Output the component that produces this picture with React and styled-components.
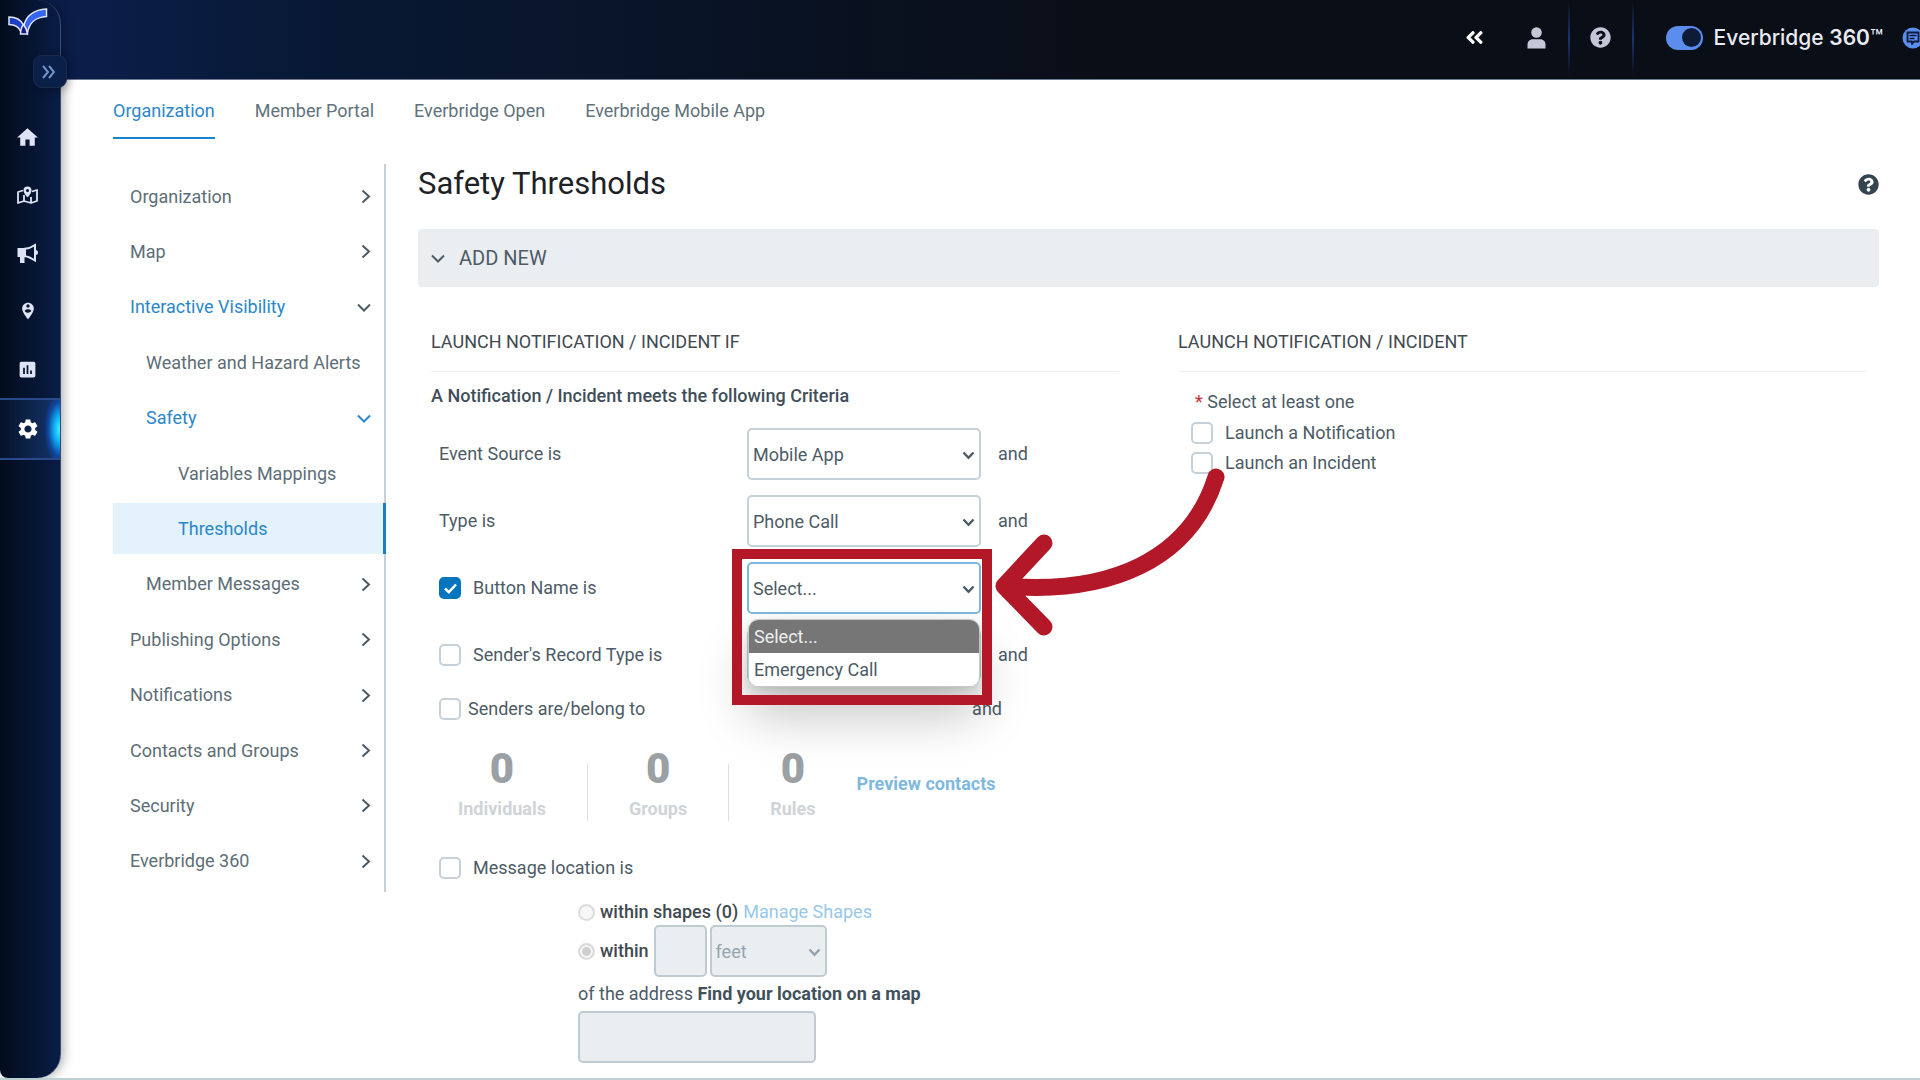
import React, { useState } from "react";
import styled, { createGlobalStyle, css } from "styled-components";
import { FaAngleDoubleLeft, FaQuestionCircle } from "react-icons/fa";
import { MdHome, MdInsertChart, MdPersonPinCircle, MdSettings } from "react-icons/md";

const tabs = ["Organization", "Member Portal", "Everbridge Open", "Everbridge Mobile App"];

const menu = [
    { label: "Organization", level: 0, arrow: "right" },
    { label: "Map", level: 0, arrow: "right" },
    { label: "Interactive Visibility", level: 0, arrow: "down", open: true },
    { label: "Weather and Hazard Alerts", level: 1 },
    { label: "Safety", level: 1, arrow: "down", open: true, blueArrow: true },
    { label: "Variables Mappings", level: 2 },
    { label: "Thresholds", level: 2, open: true, current: true },
    { label: "Member Messages", level: 1, arrow: "right" },
    { label: "Publishing Options", level: 0, arrow: "right" },
    { label: "Notifications", level: 0, arrow: "right" },
    { label: "Contacts and Groups", level: 0, arrow: "right" },
    { label: "Security", level: 0, arrow: "right" },
    { label: "Everbridge 360", level: 0, arrow: "right" },
];

function Logo() {
    return (
        <svg width="40" height="28" viewBox="0 0 40 28" aria-hidden="true">
            <path
                d="M16 17 C18 8 26 1.500 38.500 1 V8.500 C28 9 21 15 19.500 25 Z"
                fill="#3563f2"
                stroke="#dfe4fb"
                strokeWidth="1.500"
            />
            <path
                d="M1 9 C8 9 13 12 15.500 17 L13 24 C11 19 7 16.500 1 16.500 Z"
                fill="#1d3fc4"
                stroke="#dfe4fb"
                strokeWidth="1.500"
            />
            <path
                d="M15.500 16.500 C17.500 19 19 22 19.500 26 H12.500 C12.500 22.500 13.500 19 15.500 16.500 Z"
                fill="#141a86"
                stroke="#dfe4fb"
                strokeWidth="1.500"
            />
        </svg>
    );
}

function MapIcon() {
    return (
        <svg width="21" height="19" viewBox="0 0 21 19" fill="none" aria-hidden="true">
            <path
                d="M6 4.500 L1 6 V17 L7 15 L14 17 L20 15 V4 L15 5.500 M7 9 V15 M14 11 V17"
                stroke="currentColor"
                strokeWidth="1.800"
                strokeLinejoin="round"
            />
            <path
                fillRule="evenodd"
                d="M10.500 0.500 a4 4 0 0 1 4 4 c0 2.800 -4 7 -4 7 s-4 -4.200 -4 -7 a4 4 0 0 1 4 -4 Z M10.500 3 a1.500 1.500 0 1 0 0 3 a1.500 1.500 0 0 0 0 -3 Z"
                fill="currentColor"
            />
        </svg>
    );
}

function MegaphoneIcon() {
    return (
        <svg width="21" height="21" viewBox="0 0 21 21" aria-hidden="true">
            <path d="M0.500 5 H8 V14 H7.500 V20 H3 V14 H0.500 Z" fill="currentColor" />
            <path
                d="M8 5.800 C12 5.500 15 4 18 2 V17.500 C15 15.500 12 13.500 8 13.200 Z"
                fill="none"
                stroke="currentColor"
                strokeWidth="2"
            />
            <path d="M18.500 7 a2.500 2.500 0 0 1 0 5 Z" fill="currentColor" />
        </svg>
    );
}

function UserIcon() {
    return (
        <svg width="19" height="22" viewBox="0 0 19 22" fill="currentColor" aria-hidden="true">
            <circle cx="9.500" cy="5.500" r="5.300" />
            <path d="M0.500 21.500 V18 C0.500 14.500 2.500 12.300 6 12.300 H13 C16.500 12.300 18.500 14.500 18.500 18 V21.500 Z" />
        </svg>
    );
}

function Chevron({ dir = "right" }) {
    return dir === "right" ? (
        <svg width="10" height="15" viewBox="0 0 10 15" fill="none" aria-hidden="true">
            <path d="M1.500 1.500 L8 7.500 L1.500 13.500" stroke="currentColor" strokeWidth="2" />
        </svg>
    ) : (
        <svg width="14" height="9" viewBox="0 0 14 9" fill="none" aria-hidden="true">
            <path d="M1 1.500 L7 7.500 L13 1.500" stroke="currentColor" strokeWidth="2" />
        </svg>
    );
}

function ChatIcon() {
    return (
        <svg width="22" height="22" viewBox="0 0 22 22" fill="none" aria-hidden="true">
            <circle cx="11" cy="11" r="10.500" fill="#5b8def" />
            <path
                d="M5.500 5.500 H16.500 V14.500 H12 L10 17 V14.500 H5.500 Z"
                stroke="#0d1b38"
                strokeWidth="1.800"
                strokeLinejoin="round"
            />
            <path d="M7.500 8.500 H14.500 M7.500 11.500 H12.500" stroke="#0d1b38" strokeWidth="1.500" />
        </svg>
    );
}

function Check({ id, label, tight, ...rest }) {
    return (
        <CheckLabel htmlFor={id} $tight={tight}>
            <CheckBox>
                <input type="checkbox" id={id} {...rest} />
                <svg width="13" height="11" viewBox="0 0 13 11" fill="none" aria-hidden="true">
                    <path d="M1 5.500 L4.800 9.200 L12 1.500" stroke="#fff" strokeWidth="2.500" />
                </svg>
            </CheckBox>
            {label}
        </CheckLabel>
    );
}

function Select({ children, ...rest }) {
    return (
        <SelectWrap>
            <select {...rest}>{children}</select>
            <svg width="13" height="9" viewBox="0 0 13 9" fill="none" aria-hidden="true">
                <path d="M1.500 1.500 L6.500 6.800 L11.500 1.500" stroke="currentColor" strokeWidth="2.400" />
            </svg>
        </SelectWrap>
    );
}

function App() {
    const [byButton, setByButton] = useState(true);

    return (
        <Shell>
            <GlobalStyle />
            <Header>
                <HeaderButton aria-label="Collapse header">
                    <FaAngleDoubleLeft size={21} color="#fff" />
                </HeaderButton>
                <HeaderButton aria-label="Account">
                    <UserIcon />
                </HeaderButton>
                <HeaderLine />
                <HeaderButton aria-label="Help">
                    <FaQuestionCircle size={21} />
                </HeaderButton>
                <HeaderLine />
                <Product>
                    <Toggle type="checkbox" role="switch" defaultChecked />
                    <span>
                        Everbridge <b>360</b>™
                    </span>
                </Product>
                <ChatButton aria-label="Messages">
                    <ChatIcon />
                </ChatButton>
            </Header>

            <Sidebar aria-label="Main">
                <LogoLink href="#" aria-label="Everbridge">
                    <Logo />
                </LogoLink>
                <Expand aria-label="Expand menu">
                    <svg width="13" height="14" viewBox="0 0 13 14" fill="none" aria-hidden="true">
                        <path d="M1 1 L6 7 L1 13 M7 1 L12 7 L7 13" stroke="currentColor" strokeWidth="2" />
                    </svg>
                </Expand>
                <RailList>
                    <RailLink href="#" aria-label="Home">
                        <MdHome size={25} />
                    </RailLink>
                    <RailLink href="#" aria-label="Map">
                        <MapIcon />
                    </RailLink>
                    <RailLink href="#" aria-label="Notifications">
                        <MegaphoneIcon />
                    </RailLink>
                    <RailLink href="#" aria-label="Locations">
                        <MdPersonPinCircle size={20} />
                    </RailLink>
                    <RailLink href="#" aria-label="Reports">
                        <MdInsertChart size={21} />
                    </RailLink>
                    <RailLink href="#" aria-label="Settings" $active>
                        <MdSettings size={24} />
                    </RailLink>
                </RailList>
            </Sidebar>

            <Page>
                <Tabs>
                    {tabs.map((tab, i) => (
                        <Tab href="#" key={tab} $active={i === 0}>
                            {tab}
                        </Tab>
                    ))}
                </Tabs>

                <Columns>
                    <SideMenu aria-label="Settings">
                        {menu.map((item) => (
                            <MenuLink
                                href="#"
                                key={item.label}
                                $level={item.level}
                                $open={item.open}
                                $current={item.current}
                            >
                                {item.label}
                                {item.arrow && (
                                    <MenuArrow $blue={item.blueArrow}>
                                        <Chevron dir={item.arrow} />
                                    </MenuArrow>
                                )}
                            </MenuLink>
                        ))}
                    </SideMenu>

                    <main>
                        <TitleRow>
                            <h1>Safety Thresholds</h1>
                            <HelpButton aria-label="Help">
                                <FaQuestionCircle size={21} />
                            </HelpButton>
                        </TitleRow>
                        <AddNew>
                            <Chevron dir="down" />
                            ADD NEW
                        </AddNew>

                        <Form>
                            <section>
                                <SectionTitle>LAUNCH NOTIFICATION / INCIDENT IF</SectionTitle>
                                <SubTitle>A Notification / Incident meets the following Criteria</SubTitle>

                                <Criteria>
                                    <Row>
                                        <label htmlFor="source">Event Source is</label>
                                        <Select id="source">
                                            <option>Mobile App</option>
                                        </Select>
                                        <And>and</And>
                                    </Row>
                                    <Row>
                                        <label htmlFor="type">Type is</label>
                                        <Select id="type">
                                            <option>Phone Call</option>
                                        </Select>
                                        <And>and</And>
                                    </Row>
                                    <Row>
                                        <Check
                                            id="button-name"
                                            label="Button Name is"
                                            checked={byButton}
                                            onChange={() => setByButton(!byButton)}
                                        />
                                        <OpenSelect>
                                            <Select aria-label="Button name">
                                                <option>Select...</option>
                                                <option>Emergency Call</option>
                                            </Select>
                                            <Options role="listbox" aria-label="Button names">
                                                <Option role="option" aria-selected="true" $selected>
                                                    Select...
                                                </Option>
                                                <Option role="option" aria-selected="false">
                                                    Emergency Call
                                                </Option>
                                            </Options>
                                            <Highlight />
                                            <Arrow viewBox="990 460 245 185" aria-hidden="true">
                                                <path d="M1216 477 C1190 560 1110 595 1004 586 M1044 543 L1004 586 L1044 627" />
                                            </Arrow>
                                        </OpenSelect>
                                    </Row>
                                    <Row>
                                        <Check id="record-type" label="Sender's Record Type is" />
                                        <Select aria-label="Record type">
                                            <option></option>
                                        </Select>
                                        <And>and</And>
                                    </Row>
                                </Criteria>

                                <Senders>
                                    <Check id="senders" label="Senders are/belong to" tight />
                                    <span>and</span>
                                </Senders>

                                <Stats>
                                    <Stat>
                                        <b>0</b>Individuals
                                    </Stat>
                                    <StatLine />
                                    <Stat>
                                        <b>0</b>Groups
                                    </Stat>
                                    <StatLine />
                                    <Stat>
                                        <b>0</b>Rules
                                    </Stat>
                                    <Preview href="#">Preview contacts</Preview>
                                </Stats>

                                <LocationRow>
                                    <Check id="location" label="Message location is" />
                                </LocationRow>
                                <Location>
                                    <LocationLine>
                                        <Radio type="radio" name="area" id="shapes" disabled />
                                        <label htmlFor="shapes">within shapes (0)</label>
                                        <ShapesLink href="#">Manage Shapes</ShapesLink>
                                    </LocationLine>
                                    <LocationLine>
                                        <Radio type="radio" name="area" id="within" disabled defaultChecked />
                                        <label htmlFor="within">within</label>
                                        <Distance>
                                            <TextBox aria-label="Distance" disabled />
                                            <Select aria-label="Unit" disabled>
                                                <option>feet</option>
                                            </Select>
                                        </Distance>
                                    </LocationLine>
                                    <Address htmlFor="address">
                                        of the address <b>Find your location on a map</b>
                                    </Address>
                                    <AddressBox id="address" disabled />
                                </Location>
                            </section>

                            <section>
                                <SectionTitle>LAUNCH NOTIFICATION / INCIDENT</SectionTitle>
                                <Launch>
                                    <Required>
                                        <i>*</i> Select at least one
                                    </Required>
                                    <Check id="launch-notification" label="Launch a Notification" />
                                    <Check id="launch-incident" label="Launch an Incident" />
                                </Launch>
                            </section>
                        </Form>
                    </main>
                </Columns>
            </Page>
        </Shell>
    );
}

const GlobalStyle = createGlobalStyle`
    * {
        box-sizing: border-box;
    }

    body {
        margin: 0;
        background: #fff;
        color: #4d5b66;
        font-family: Roboto, "Liberation Sans", sans-serif;
        font-size: 18px;
        line-height: 24px;
    }

    h1, h2, h3, p, ul {
        margin: 0;
        padding: 0;
        font-weight: 400;
    }

    a {
        color: inherit;
        text-decoration: none;
    }

    button, input, select {
        font: inherit;
        color: inherit;
        margin: 0;
    }

    button {
        border: 0;
        padding: 0;
        background: none;
        cursor: pointer;
    }

    svg {
        flex: none;
    }
`;

const Shell = styled.div`
    display: grid;
    grid-template-columns: 61px minmax(0, 1fr);
    grid-template-rows: auto 1fr;
    min-height: 100vh;
    overflow: hidden;
    border-bottom: 2px solid #bcd0d1;
`;

const Header = styled.header`
    grid-column: 1 / -1;
    grid-row: 1;
    display: flex;
    align-items: center;
    justify-content: flex-end;
    height: 80px;
    padding-bottom: 4px;
    overflow: hidden;
    color: #c3c7d8;
    background: linear-gradient(90deg, #0b1e4a 0, #0b1e4a 80px, #081935 300px, #0a0e17 1100px);
    border-bottom: 1px solid #6f7a90;
`;

const HeaderButton = styled.button`
    display: grid;
    place-items: center;
    width: 62px;
    height: 64px;
    flex: none;
`;

const HeaderLine = styled.span`
    width: 2px;
    height: 76px;
    flex: none;
    background: linear-gradient(#0a0e17, #17356f 50%, #0a0e17);
`;

const Product = styled.label`
    display: flex;
    align-items: center;
    gap: 11px;
    margin-left: 32px;
    color: #e9ebf3;
    font-family: Inter, "Liberation Sans", sans-serif;
    font-size: 21px;
    font-weight: 500;
    white-space: nowrap;

    b {
        font-weight: 600;
    }
`;

const Toggle = styled.input`
    appearance: none;
    display: flex;
    align-items: center;
    justify-content: flex-end;
    width: 37px;
    height: 24px;
    padding: 0 2px;
    border-radius: 12px;
    background: #5b8def;

    &::before {
        content: "";
        width: 19px;
        height: 19px;
        border-radius: 50%;
        background: #0d1b38;
    }
`;

const ChatButton = styled.button`
    display: flex;
    width: 18px;
    margin-left: 19px;
    flex: none;
`;

const Sidebar = styled.nav`
    grid-column: 1;
    grid-row: 1 / 3;
    z-index: 1;
    display: flex;
    flex-direction: column;
    align-items: flex-start;
    color: #dfe4f5;
    background: linear-gradient(90deg, #020c1b, #051431 50%, #091d44);
    border-right: 1px solid #3a4a78;
    border-radius: 0 24px 24px 8px;
    box-shadow: 2px 0 12px rgba(0, 0, 0, 0.35);
`;

const LogoLink = styled.a`
    display: flex;
    padding: 8px 0 0 8px;
`;

const Expand = styled.button`
    display: grid;
    place-items: center;
    width: 34px;
    height: 33px;
    margin: 19px 0 0 33px;
    padding-right: 3px;
    color: #6f93cf;
    background: #0a2049;
    border: 1px solid #1b2b4d;
    border-radius: 9px;
    box-shadow: 2px 2px 8px rgba(0, 0, 0, 0.3);
`;

const RailList = styled.div`
    width: 100%;
    padding-top: 20px;
`;

const RailLink = styled.a`
    display: grid;
    place-items: center;
    height: 58px;
    padding-right: 5px;

    ${({ $active }) =>
        $active &&
        css`
            height: 62px;
            color: #fff;
            border-top: 2px solid #284a8c;
            border-bottom: 2px solid #284a8c;
            background: radial-gradient(ellipse 16px 36px at 100% 50%, #4df0ff 0, #0fb4f8 35%, rgba(10, 90, 215, 0.5) 75%, transparent 100%),
                linear-gradient(90deg, #051229, #15356f);
        `}
`;

const Page = styled.div`
    grid-column: 2;
    grid-row: 2;
    padding: 19px 41px 15px 52px;
`;

const Tabs = styled.nav`
    display: flex;
    gap: 40px;
    color: #61727b;
`;

const Tab = styled.a`
    padding-bottom: 14px;
    border-bottom: 2px solid ${({ $active }) => ($active ? "#1583cb" : "transparent")};
    color: ${({ $active }) => ($active ? "#2b87c9" : "inherit")};
`;

const Columns = styled.div`
    display: grid;
    grid-template-columns: 273px minmax(0, 1fr);
    align-items: start;
    gap: 32px;
    margin-top: 25px;
`;

const SideMenu = styled.nav`
    display: flex;
    flex-direction: column;
    justify-content: space-between;
    min-height: 728px;
    padding: 7px 0 5px;
    border-right: 2px solid #c5d0d8;
`;

const MenuLink = styled.a`
    display: flex;
    align-items: center;
    justify-content: space-between;
    height: 51px;
    padding-right: 13px;
    padding-left: ${({ $level }) => [17, 33, 65][$level]}px;
    color: ${({ $open }) => ($open ? "#2b87c9" : "#5d6e76")};
    white-space: nowrap;

    ${({ $current }) =>
        $current &&
        css`
            margin-right: -2px;
            background: #e4f2fc;
            border-right: 3px solid #1a80c4;
        `}
`;

const MenuArrow = styled.span`
    display: flex;
    color: ${({ $blue }) => ($blue ? "#2b87c9" : "#4d5b66")};
`;

const TitleRow = styled.div`
    display: flex;
    align-items: center;
    justify-content: space-between;

    h1 {
        color: #1c2226;
        font-size: 31px;
        line-height: 40px;
    }
`;

const HelpButton = styled.button`
    display: flex;
    color: #34454f;
`;

const AddNew = styled.button`
    display: flex;
    align-items: center;
    gap: 14px;
    width: 100%;
    height: 58px;
    margin-top: 25px;
    padding: 0 13px;
    border-radius: 4px;
    background: #ebeef1;
    font-size: 20px;
`;

const Form = styled.div`
    display: grid;
    grid-template-columns: 1fr 1fr;
    gap: 59px;
    padding: 43px 13px 0;
`;

const SectionTitle = styled.h2`
    padding-bottom: 17px;
    border-bottom: 1px solid #edf0f2;
    color: #414950;
    font-size: 18px;
`;

const SubTitle = styled.h3`
    margin-top: 12px;
    color: #414e59;
    font-size: 18px;
    font-weight: 500;
`;

const Criteria = styled.div`
    display: flex;
    flex-direction: column;
    gap: 15px;
    padding: 20px 0 0 8px;
`;

const Row = styled.div`
    display: grid;
    grid-template-columns: 308px 234px auto;
    align-items: center;
`;

const And = styled.span`
    padding-left: 17px;
`;

const CheckLabel = styled.label`
    display: flex;
    align-items: center;
    gap: ${({ $tight }) => ($tight ? 7 : 12)}px;
`;

const CheckBox = styled.span`
    display: grid;
    place-items: center;

    > * {
        grid-area: 1 / 1;
    }

    input {
        appearance: none;
        width: 22px;
        height: 22px;
        border: 2px solid #c5d0d8;
        border-radius: 5px;
        background: #fff;
    }

    input:checked {
        border-color: #0275bd;
        background: #0275bd;
    }

    svg {
        visibility: hidden;
        pointer-events: none;
    }

    input:checked + svg {
        visibility: visible;
        z-index: 1;
    }
`;

const SelectWrap = styled.span`
    display: grid;
    align-items: center;
    color: #4d5b66;

    > * {
        grid-area: 1 / 1;
    }

    select {
        appearance: none;
        width: 100%;
        height: 52px;
        padding: 2px 30px 0 4px;
        border: 2px solid #c5d0d8;
        border-radius: 5px;
        background: #fff;
    }

    svg {
        justify-self: end;
        margin: 2px 6px 0 0;
        pointer-events: none;
    }

    &:has(select:disabled) {
        color: #94a3ad;
    }

    select:disabled {
        background: #ebeef1;
        border-color: #bfcbd2;
        opacity: 1;
    }
`;

const OpenSelect = styled.div`
    position: relative;
    z-index: 2;

    select {
        border-color: #7db8e0;
    }
`;

const Options = styled.ul`
    position: absolute;
    top: 57px;
    left: 1px;
    right: 1px;
    overflow: hidden;
    list-style: none;
    background: #fff;
    border: 1px solid #c6c9cb;
    border-radius: 10px;
    box-shadow: 0 30px 50px rgba(0, 0, 0, 0.22), 0 4px 12px rgba(0, 0, 0, 0.15);
`;

const Option = styled.li`
    padding: 5px 5px 4px;
    color: ${({ $selected }) => ($selected ? "#eee" : "#4d5b66")};
    background: ${({ $selected }) => ($selected ? "#767676" : "#fff")};
`;

/* callout round the open list */
const Highlight = styled.span`
    position: absolute;
    top: -13px;
    left: -15px;
    width: 260px;
    height: 156px;
    border: 10px solid #b21828;
    pointer-events: none;
`;

const Arrow = styled.svg`
    position: absolute;
    top: -102px;
    left: 243px;
    width: 245px;
    height: 185px;
    fill: none;
    stroke: #b21828;
    stroke-width: 17;
    stroke-linecap: round;
    stroke-linejoin: round;
    pointer-events: none;
`;

const Senders = styled.div`
    display: flex;
    justify-content: space-between;
    width: 571px;
    padding: 16px 0 0 8px;
`;

const Stats = styled.div`
    display: flex;
    align-items: flex-end;
    gap: 41px;
    padding: 26px 0 0 27px;
`;

const Stat = styled.span`
    display: flex;
    flex-direction: column;
    align-items: center;
    gap: 6px;
    color: #cfd4d8;
    font-weight: 700;

    b {
        color: #9aa0a4;
        font-size: 42px;
        line-height: 44px;
    }
`;

const StatLine = styled.span`
    width: 1px;
    height: 57px;
    background: #d9dfe3;
`;

const Preview = styled.a`
    align-self: center;
    color: #7fb9e0;
    font-weight: 700;
`;

const LocationRow = styled.div`
    padding: 35px 0 0 8px;
`;

const Location = styled.div`
    padding: 19px 0 0 147px;
`;

const LocationLine = styled.div`
    display: flex;
    align-items: center;
    gap: 5px;
    min-height: 26px;

    label {
        color: #414950;
        font-weight: 500;
    }
`;

const Radio = styled.input`
    appearance: none;
    width: 17px;
    height: 17px;
    border: 2px solid #dcdcdc;
    border-radius: 50%;
    background: #f7f7f7;

    &:checked {
        background: #cfcfcf;
        box-shadow: inset 0 0 0 2px #f7f7f7;
    }
`;

const ShapesLink = styled.a`
    color: #97c8e8;
`;

const Distance = styled.span`
    display: grid;
    grid-template-columns: 53px 117px;
    gap: 3px;
`;

const TextBox = styled.input`
    width: 100%;
    height: 52px;
    border: 2px solid #bfcbd2;
    border-radius: 5px;
    background: #ebeef1;
`;

const Address = styled.label`
    display: block;
    padding: 5px 0;

    b {
        color: #41525c;
    }
`;

const AddressBox = styled(TextBox)`
    display: block;
    width: 238px;
`;

const Launch = styled.div`
    display: flex;
    flex-direction: column;
    gap: 6px;
    padding: 18px 0 0 13px;
`;

const Required = styled.p`
    padding: 0 0 1px 4px;

    i {
        color: #c2323a;
        font-style: normal;
    }
`;

export default App;
